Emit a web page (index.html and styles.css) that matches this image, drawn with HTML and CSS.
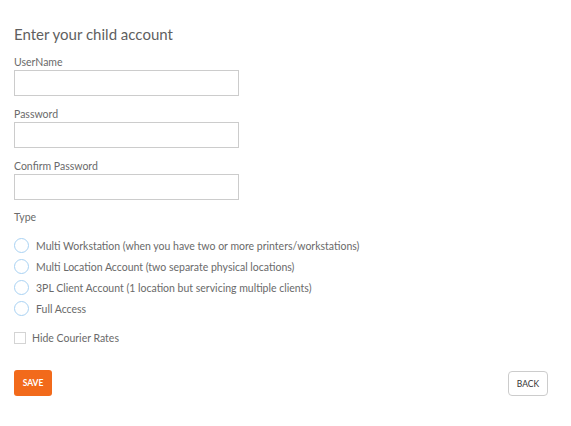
FILE: index.html
```html
<!DOCTYPE html>
<html lang="en">
<head>
  <meta charset="UTF-8" />
  <meta name="viewport" content="width=device-width, initial-scale=1.0" />
  <title>Child account</title>
  <link rel="stylesheet" href="styles.css">
</head>
<body>

  <div class="container">
    <h2>Enter your child account</h2>
    <form id="childForm">
      <div class="field">
        <label for="userName">UserName</label>
        <input type="text" id="userName">
      </div>
      <div class="field">
        <label for="password">Password</label>
        <input type="password" id="password">
      </div>
      <div class="field">
        <label for="confirmPassword">Confirm Password</label>
        <input type="password" id="confirmPassword">
      </div>

      <div class="type-label">Type</div>
      <div class="radio-list">
        <label class="radio-row"><input type="radio" name="type"> <span>Multi Workstation (when you have two or more printers/workstations)</span></label>
        <label class="radio-row"><input type="radio" name="type"> <span>Multi Location Account (two separate physical locations)</span></label>
        <label class="radio-row"><input type="radio" name="type"> <span>3PL Client Account (1 location but servicing multiple clients)</span></label>
        <label class="radio-row"><input type="radio" name="type"> <span>Full Access</span></label>
      </div>

      <label class="check-row"><input type="checkbox"> <span>Hide Courier Rates</span></label>

      <div class="actions">
        <button type="submit" class="save-button">SAVE</button>
        <button type="button" class="back-button">BACK</button>
      </div>
    </form>
  </div>

</body>
</html>
```

FILE: styles.css
```css
body {
  font-family: 'Lato', 'Liberation Sans', sans-serif;
  margin: 0;
  padding: 0;
  background: #ffffff;
  color: #6a6a6a;
}

.container {
  padding: 24px 23px 0 14px;
}

h2 {
  font-size: 15px;
  line-height: 20px;
  font-weight: 400;
  color: #5f5f5f;
  margin: 0 0 11px 0;
}

.field {
  margin-bottom: 11px;
}

.field label {
  display: block;
  font-size: 10.5px;
  line-height: 14px;
  margin-bottom: 1px;
  color: #6a6a6a;
}

.field input {
  display: block;
  box-sizing: border-box;
  width: 225px;
  height: 26px;
  border: 1px solid #cccccc;
  border-radius: 0;
  padding: 4px 6px;
  margin: 0;
  font-size: 12px;
}

.type-label {
  font-size: 10.5px;
  line-height: 14px;
  margin-top: -1px;
  margin-bottom: 11px;
}

.radio-list {
  display: flex;
  flex-direction: column;
}

.radio-row {
  display: flex;
  align-items: center;
  height: 21px;
  font-size: 10.5px;
  color: #6a6a6a;
}

.radio-row input {
  appearance: none;
  -webkit-appearance: none;
  box-sizing: border-box;
  width: 15px;
  height: 15px;
  margin: 0 7px 0 0;
  border: 1.5px solid #a9d2f3;
  border-radius: 50%;
  background: #ffffff;
}

.check-row {
  display: flex;
  align-items: center;
  height: 14px;
  margin-top: 12px;
  font-size: 10.5px;
  color: #6a6a6a;
}

.check-row input {
  appearance: none;
  -webkit-appearance: none;
  box-sizing: border-box;
  width: 12px;
  height: 12px;
  margin: 0 6px 0 0;
  border: 1px solid #d4d4d4;
  background: #ffffff;
}

.actions {
  display: flex;
  justify-content: space-between;
  align-items: flex-start;
  margin-top: 25px;
}

.save-button {
  font-family: inherit;
  width: 38px;
  height: 26px;
  padding: 0;
  background-color: #f26a1b;
  color: #ffffff;
  border: none;
  border-radius: 3px;
  font-size: 8.5px;
  font-weight: 700;
  cursor: pointer;
}

.back-button {
  font-family: inherit;
  width: 40px;
  height: 25px;
  margin-top: 1px;
  padding: 0;
  background-color: #ffffff;
  color: #333333;
  border: 1px solid #cccccc;
  border-radius: 4px;
  font-size: 8.5px;
  cursor: pointer;
}
```
